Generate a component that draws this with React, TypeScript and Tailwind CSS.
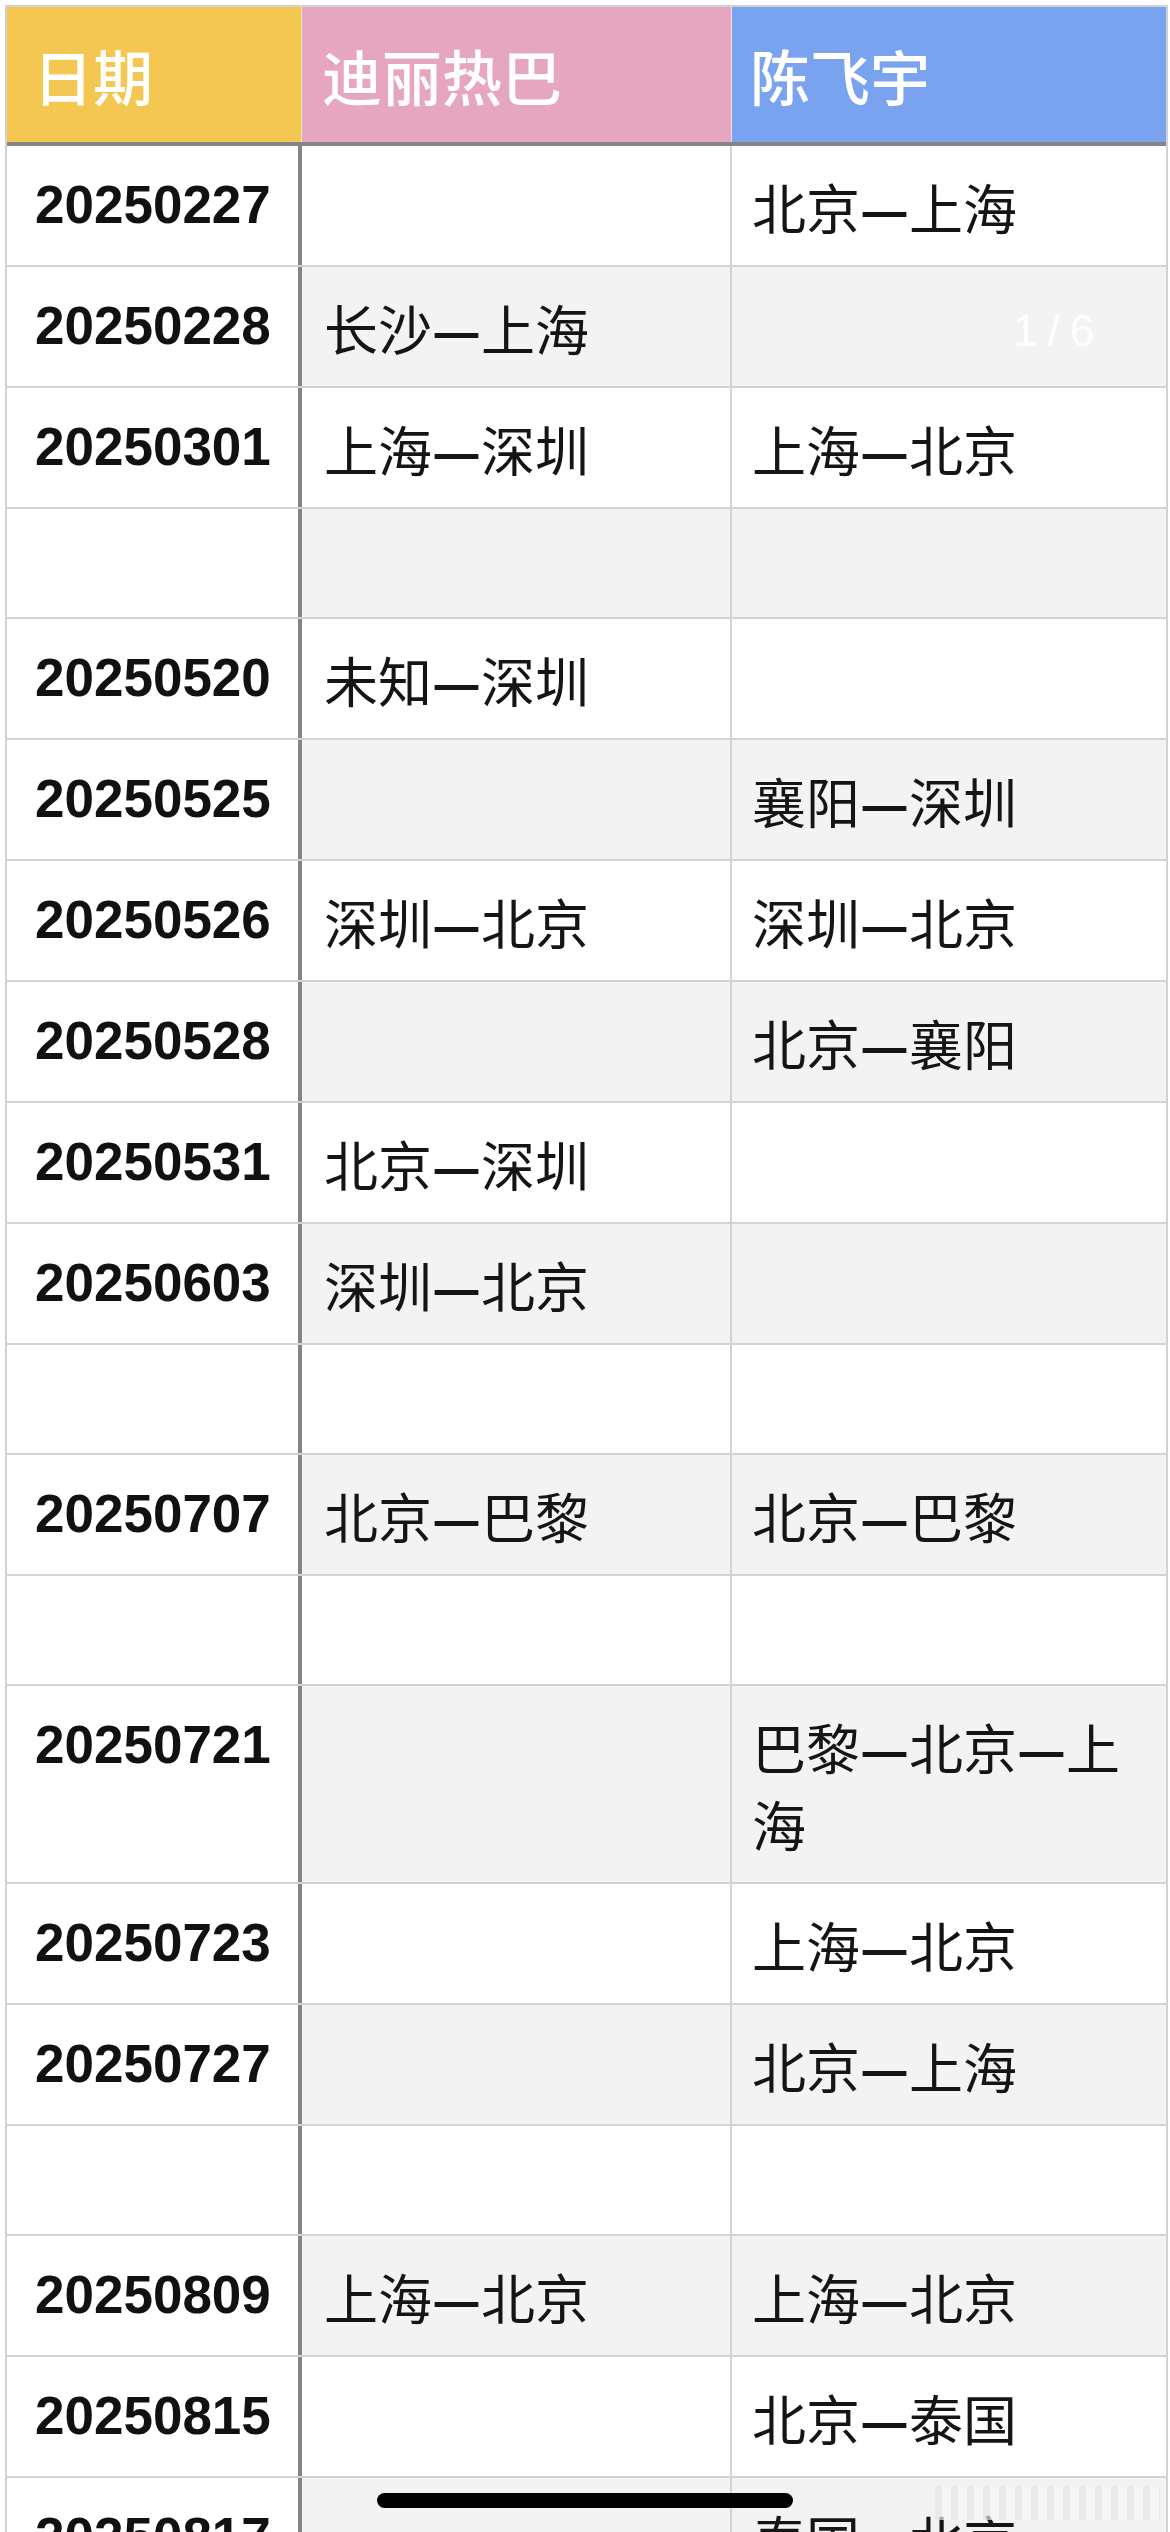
import { Fragment } from "react";

type Row = { date?: string; dili?: string; chen?: string };

const rows: Row[] = [
  { date: "20250227", chen: "北京—上海" },
  { date: "20250228", dili: "长沙—上海" },
  { date: "20250301", dili: "上海—深圳", chen: "上海—北京" },
  {},
  { date: "20250520", dili: "未知—深圳" },
  { date: "20250525", chen: "襄阳—深圳" },
  { date: "20250526", dili: "深圳—北京", chen: "深圳—北京" },
  { date: "20250528", chen: "北京—襄阳" },
  { date: "20250531", dili: "北京—深圳" },
  { date: "20250603", dili: "深圳—北京" },
  {},
  { date: "20250707", dili: "北京—巴黎", chen: "北京—巴黎" },
  {},
  { date: "20250721", chen: "巴黎—北京—上海" },
  { date: "20250723", chen: "上海—北京" },
  { date: "20250727", chen: "北京—上海" },
  {},
  { date: "20250809", dili: "上海—北京", chen: "上海—北京" },
  { date: "20250815", chen: "北京—泰国" },
  { date: "20250817", chen: "泰国—北京" },
];

const cjk = "font-['Noto_Sans_CJK_SC','Noto_Sans',sans-serif]";

// dashes in the screenshot are heavier than the glyphs around them
function Route({ text }: { text?: string }) {
  if (!text) return null;
  const parts = text.split("—");
  return (
    <>
      {parts.map((p, i) => (
        <Fragment key={i}>
          {i > 0 && <span className="font-bold">—</span>}
          {p}
        </Fragment>
      ))}
    </>
  );
}

function TableRow({ row, index }: { row: Row; index: number }) {
  const striped = index % 2 === 1 ? "bg-[#f3f3f3]" : "bg-white";
  const blank = !row.date;

  return (
    <div
      className={`flex border-b-2 border-[#d3d3d3] ${blank ? "h-[110px]" : ""}`}
    >
      <div className="w-[295px] shrink-0 border-r-4 border-[#858585] bg-white pl-[28px] pt-[20px] pb-[22px] font-['Liberation_Sans',Arial,sans-serif] text-[53px] font-bold leading-[77px] text-[#111]">
        {row.date}
      </div>
      <div
        className={`w-[430px] shrink-0 border-r-2 border-[#d3d3d3] pl-[22px] pr-5 pt-[22px] pb-[20px] text-[54px] leading-[77px] text-[#151515] ${cjk} ${striped}`}
      >
        <Route text={row.dili} />
      </div>
      <div
        className={`min-w-0 flex-1 pl-5 pr-6 pt-[22px] pb-[20px] text-[54px] leading-[77px] text-[#151515] ${cjk} ${striped}`}
      >
        <Route text={row.chen} />
      </div>
    </div>
  );
}

export default function App() {
  return (
    <div className="relative h-[2532px] w-[1170px] overflow-hidden bg-white pl-[5px] pt-[5px]">
      <div className="w-[1163px] border-x-2 border-t-2 border-[#d2d2d2]">
        <div
          className={`flex h-[139px] border-b-4 border-[#858585] text-[60px] font-medium leading-none text-white ${cjk}`}
        >
          <div className="flex w-[295px] shrink-0 items-center border-r border-white/60 bg-[#f4c752] pl-[26px]">
            日期
          </div>
          <div className="flex w-[430px] shrink-0 items-center border-r border-white/60 bg-[#e6a6c0] pl-[20px]">
            迪丽热巴
          </div>
          <div className="flex flex-1 items-center bg-[#79a2ef] pl-[18px]">
            陈飞宇
          </div>
        </div>
        {rows.map((row, i) => (
          <TableRow key={i} row={row} index={i} />
        ))}
      </div>

      <span className="absolute left-[1013px] top-[309px] font-['Liberation_Sans',Arial,sans-serif] text-[44px] leading-none tracking-tight text-white/90">
        1 / 6
      </span>

      <div className="absolute left-[935px] top-[2486px] h-[34px] w-[225px] bg-[repeating-linear-gradient(90deg,#e6e6e6_0_7px,#f6f6f6_7px_16px)] opacity-70" />

      <div className="absolute left-[377px] top-[2493px] h-[15px] w-[416px] rounded-full bg-black" />
    </div>
  );
}
